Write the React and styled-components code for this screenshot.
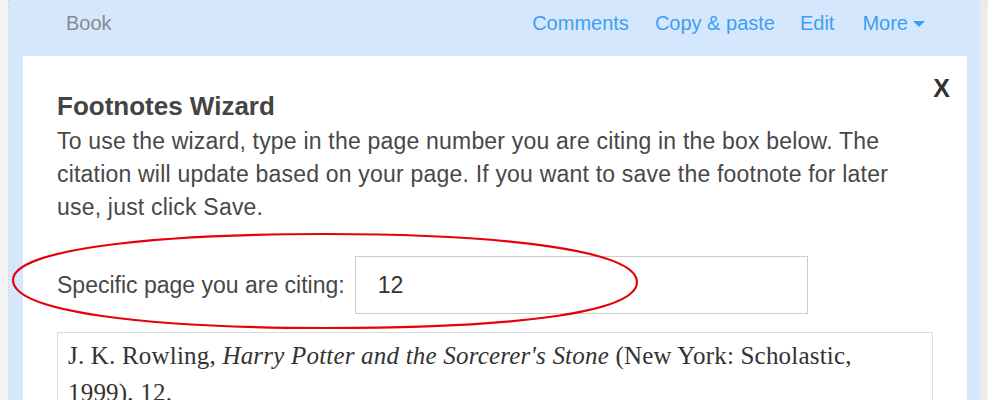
import React from "react";
import styled, { createGlobalStyle } from "styled-components";

const Global = createGlobalStyle`
  html, body { margin: 0; padding: 0; background: #ffffff; }
  body { font-family: "Liberation Sans", Arial, sans-serif; }
`;

const Page = styled.div`
  display: flex;
  height: 400px;
  overflow: hidden;
`;

const LeftGutter = styled.div`
  width: 8px;
  background: #f3f3f3;
  border-right: 1px dotted #cfcfcf;
`;

const RightGutter = styled.div`
  display: flex;
  width: 20px;
`;

const GrayBand = styled.div`
  width: 7px;
  background: #ebebeb;
`;

const WhiteBand = styled.div`
  flex: 1;
  background: #ffffff;
  border-left: 1px dotted #e2e2e2;
`;

const Main = styled.div`
  flex: 1;
  min-height: 0;
  background: #d5e7fd;
  display: flex;
  flex-direction: column;
`;

const Header = styled.div`
  flex: 0 0 56px;
  height: 56px;
  box-sizing: border-box;
  padding: 11px 55px 0 57px;
  display: flex;
  align-items: flex-start;
  font-size: 20px;
  line-height: 24px;
`;

const Crumb = styled.span`
  color: #8a8a8a;
  flex: 1;
`;

const NavLink = styled.a`
  color: #3d9ff2;
  text-decoration: none;
  margin-left: ${(p) => p.$gap || 26}px;
  display: flex;
  align-items: center;
`;

const Caret = styled.span`
  display: inline-block;
  width: 0;
  height: 0;
  margin-left: 5px;
  margin-top: 1px;
  border-left: 6px solid transparent;
  border-right: 6px solid transparent;
  border-top: 6px solid #3d9ff2;
`;

const Card = styled.div`
  position: relative;
  flex: 1 0 auto;
  margin: 0 13px 0 14px;
  background: #ffffff;
  padding: 35px 34px 0 34px;
`;

const Close = styled.button`
  position: absolute;
  top: 17px;
  right: 17px;
  border: 0;
  padding: 0;
  background: none;
  font-family: "Liberation Sans", Arial, sans-serif;
  font-weight: bold;
  font-size: 25px;
  line-height: 30px;
  color: #333333;
  cursor: pointer;
`;

const Title = styled.h2`
  margin: 0;
  font-size: 26px;
  line-height: 30px;
  font-weight: bold;
  color: #444444;
`;

const Intro = styled.p`
  margin: 4px 0 0 0;
  max-width: 840px;
  font-size: 23px;
  line-height: 33px;
  letter-spacing: 0.2px;
  color: #484848;
`;

const FieldRow = styled.div`
  position: relative;
  display: flex;
  align-items: center;
  margin-top: 32px;
`;

const Label = styled.label`
  font-size: 23px;
  color: #484848;
  margin-right: 10px;
`;

const PageInput = styled.input`
  width: 453px;
  height: 58px;
  box-sizing: border-box;
  border: 1px solid #cccccc;
  padding: 0 0 0 22px;
  font-family: "Liberation Sans", Arial, sans-serif;
  font-size: 23px;
  color: #333333;
  outline: none;
`;

const Highlight = styled.svg`
  position: absolute;
  left: -50px;
  top: -30px;
  pointer-events: none;
  overflow: visible;
`;

const Citation = styled.div`
  margin-top: 18px;
  border: 1px solid #d9dae2;
  padding: 4px 10px 20px 10px;
  font-family: "Liberation Serif", "Times New Roman", serif;
  font-size: 25px;
  line-height: 37px;
  letter-spacing: 0.2px;
  color: #333333;
`;

export default function App() {
  return (
    <>
      <Global />
      <Page>
        <LeftGutter />
        <Main>
          <Header>
            <Crumb>Book</Crumb>
            <NavLink href="#">Comments</NavLink>
            <NavLink href="#" $gap={26}>Copy &amp; paste</NavLink>
            <NavLink href="#" $gap={25}>Edit</NavLink>
            <NavLink href="#" $gap={28}>
              More<Caret />
            </NavLink>
          </Header>
          <Card>
            <Close aria-label="Close">X</Close>
            <Title>Footnotes Wizard</Title>
            <Intro>
              To use the wizard, type in the page number you are citing in the box below. The
              citation will update based on your page. If you want to save the footnote for later
              use, just click Save.
            </Intro>
            <FieldRow>
              <Label htmlFor="pg">Specific page you are citing:</Label>
              <PageInput id="pg" defaultValue="12" />
              <Highlight width="700" height="110" viewBox="0 0 700 110">
                <path
                  d="M 318 8 C 500 8 630 25 630 56 C 630 88 500 102 318 102 C 140 102 6 86 6 54 C 6 24 140 8 318 8 Z"
                  fill="none"
                  stroke="#e6000a"
                  strokeWidth="2.2"
                />
              </Highlight>
            </FieldRow>
            <Citation>
              J. K. Rowling, <i>Harry Potter and the Sorcerer's Stone</i> (New York: Scholastic,
              1999), 12.
            </Citation>
          </Card>
        </Main>
        <RightGutter>
          <GrayBand />
          <WhiteBand />
        </RightGutter>
      </Page>
    </>
  );
}
